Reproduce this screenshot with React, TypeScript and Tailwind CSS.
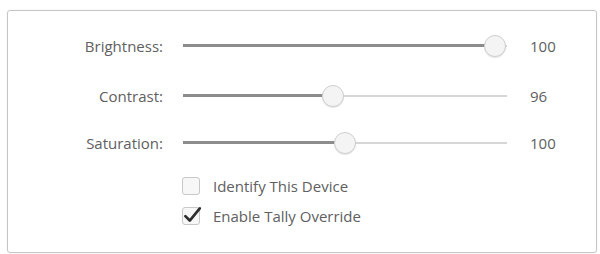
import React from 'react'

const sliders = [
  { label: 'Brightness:', value: '100', pos: 312 },
  { label: 'Contrast:', value: '96', pos: 150 },
  { label: 'Saturation:', value: '100', pos: 162 },
]

function Slider({ pos }: { pos: number }) {
  return (
    <div className="relative h-[22px] w-[324px]">
      <div className="absolute left-0 right-0 top-[10px] h-[2px] bg-[#d6d6d6]" />
      <div className="absolute left-0 top-[9px] h-[3px] bg-[#8c8c8c]" style={{ width: pos }} />
      <div
        className="absolute top-0 h-[22px] w-[22px] rounded-full border border-[#cfcfcf] bg-[#f4f4f4] shadow-[0_1px_1px_rgba(0,0,0,0.1)]"
        style={{ left: pos - 11 }}
      />
    </div>
  )
}

export default function App() {
  return (
    <div className="h-[254px] w-[600px] bg-white pl-[7px] pr-[3px] pt-[10px] pb-[1px] font-['Open_Sans',sans-serif] text-[15px] text-[#606060]">
      <div className="h-full w-full rounded-[3px] border border-[#c6c6c6] shadow-[0_0_2px_rgba(0,0,0,0.08)]">
        <div className="flex flex-col pt-[24px]">
          {sliders.map((s, i) => (
            <div key={s.label} className={`flex items-center ${i === 0 ? '' : i === 1 ? 'mt-[27px]' : 'mt-[25px]'}`}>
              <div className="w-[155px] text-right">{s.label}</div>
              <div className="ml-[20px]">
                <Slider pos={s.pos} />
              </div>
              <div className="ml-[23px]">{s.value}</div>
            </div>
          ))}
          <div className="ml-[174px] mt-[20px] flex flex-col gap-[8px]">
            <label className="flex items-center gap-[13px]">
              <span className="h-[18px] w-[18px] rounded-[3px] border border-[#c8c8c8] bg-[#f7f7f7]" />
              <span>Identify This Device</span>
            </label>
            <label className="flex items-center gap-[13px]">
              <span className="relative h-[18px] w-[18px] rounded-[3px] border border-[#c8c8c8] bg-[#f7f7f7]">
                <svg viewBox="0 0 18 18" className="absolute -left-[1px] -top-[3px] h-[20px] w-[20px]">
                  <path d="M3 10 L7 14 L16 3" fill="none" stroke="#2e2e2e" strokeWidth="2.4" strokeLinecap="round" strokeLinejoin="round" />
                </svg>
              </span>
              <span>Enable Tally Override</span>
            </label>
          </div>
        </div>
      </div>
    </div>
  )
}
